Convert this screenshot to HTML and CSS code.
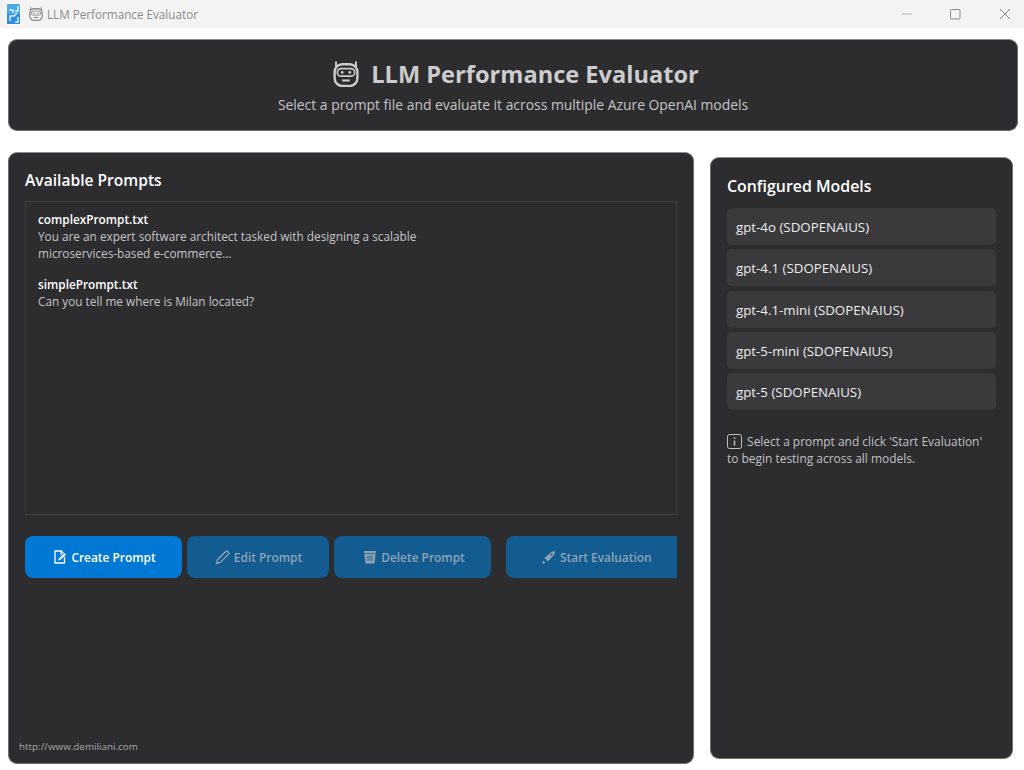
FILE: index.html
```html
<!DOCTYPE html>
<html lang="en">
<head>
<meta charset="utf-8">
<title>LLM Performance Evaluator</title>
<link rel="stylesheet" href="styles.css">
</head>
<body>
<div class="titlebar">
  <svg class="app-logo" width="14" height="22" viewBox="0 0 14 22"><rect width="14" height="22" fill="#fff"/><rect x="0" y="1" width="13" height="20" rx="1" fill="#4aa8e8"/><rect x="0" y="11" width="13" height="10" fill="#2f8fdc"/><path d="M2 7h4v3M11 3v5H8M3 18v-5h4l3-3M11 14v5H8" fill="none" stroke="#d8f1ff" stroke-width="1.500"/></svg>
  <svg class="title-bot" width="14" height="14" viewBox="0 0 24 24"><use href="#bot"/></svg>
  <span class="title-text">LLM Performance Evaluator</span>
  <div class="win-controls">
    <svg width="12" height="12" viewBox="0 0 12 12"><path d="M1 6h10" stroke="#b5b5b5" stroke-width="1"/></svg>
    <svg width="12" height="12" viewBox="0 0 12 12"><rect x=".5" y="1.500" width="9.500" height="9.500" rx="1" fill="none" stroke="#8a8a8a" stroke-width="1"/></svg>
    <svg width="12" height="12" viewBox="0 0 12 12"><path d="M1 1l10 10M11 1L1 11" stroke="#8a8a8a" stroke-width="1"/></svg>
  </div>
</div>

<svg class="defs" width="0" height="0">
  <defs>
    <symbol id="bot" viewBox="0 0 24 24">
      <path d="M2.800 .5v6M21.200 .5v6" stroke="currentColor" stroke-width="1.800"/>
      <rect x="1.500" y="3" width="21" height="20" rx="7" fill="none" stroke="currentColor" stroke-width="2.200"/>
      <rect x="4" y="7" width="16" height="7" rx="3.500" fill="none" stroke="currentColor" stroke-width="1.500"/>
      <circle cx="8.500" cy="10.500" r="1.300" fill="currentColor"/>
      <circle cx="15.500" cy="10.500" r="1.300" fill="currentColor"/>
      <path d="M8.500 18h7" stroke="currentColor" stroke-width="2"/>
    </symbol>
  </defs>
</svg>

<header class="hero card">
  <h1 class="hero-title"><svg class="hero-bot" width="26" height="26" viewBox="0 0 24 24"><use href="#bot"/></svg>LLM Performance Evaluator</h1>
  <p class="hero-sub">Select a prompt file and evaluate it across multiple Azure OpenAI models</p>
</header>

<main class="columns">
  <section class="prompts card">
    <h2 class="section-title">Available Prompts</h2>
    <div class="prompt-list">
      <div class="prompt">
        <div class="prompt-name">complexPrompt.txt</div>
        <div class="prompt-text">You are an expert software architect tasked with designing a scalable<br>microservices-based e-commerce...</div>
      </div>
      <div class="prompt">
        <div class="prompt-name">simplePrompt.txt</div>
        <div class="prompt-text">Can you tell me where is Milan located?</div>
      </div>
    </div>
    <div class="actions">
      <button class="btn btn-create">
        <svg width="14" height="14" viewBox="0 0 14 14"><path d="M8.500 1H2v12h9.500V5z" fill="none" stroke="currentColor" stroke-width="1.300"/><path d="M8 1v4h3.500" fill="none" stroke="currentColor" stroke-width="1"/><path d="M4.500 11l1-2.500L11.500 3l2 1.500-6 5.500z" fill="currentColor" stroke="#0078d4" stroke-width=".7"/></svg>
        Create Prompt
      </button>
      <button class="btn btn-edit">
        <svg width="15" height="15" viewBox="0 0 15 15"><path d="M1.500 13.500l1-3.800L10.700 1.500a1.400 1.400 0 0 1 2 0l.8.8a1.400 1.400 0 0 1 0 2L5.300 12.500z" fill="none" stroke="currentColor" stroke-width="1.300"/></svg>
        Edit Prompt
      </button>
      <button class="btn btn-delete">
        <svg width="14" height="14" viewBox="0 0 14 14"><path d="M1 1h12L11.500 13.500h-9z" fill="currentColor"/><path d="M1.500 3.500h11" stroke="#125c91" stroke-width=".8"/><path d="M5 5.500v5.500M7 5.500v5.500M9 5.500v5.500" stroke="#125c91" stroke-width=".8"/></svg>
        Delete Prompt
      </button>
      <button class="btn btn-start">
        <svg width="15" height="15" viewBox="0 0 15 15"><path d="M3.500 8L10 2.200c1.200-.9 2.700-1 3.800-.9.200 1.200 0 2.700-1 3.800L7 11.500z" fill="currentColor"/><circle cx="10.500" cy="4.500" r="1.100" fill="#125c91"/><path d="M1 14l3.500-1.300L2.300 10.500z" fill="currentColor"/></svg>
        Start Evaluation
      </button>
    </div>
    <div class="footer-link">http://www.demiliani.com</div>
  </section>

  <aside class="models card">
    <h2 class="section-title models-title">Configured Models</h2>
    <ul class="model-list">
      <li class="model">gpt-4o (SDOPENAIUS)</li>
      <li class="model">gpt-4.1 (SDOPENAIUS)</li>
      <li class="model">gpt-4.1-mini (SDOPENAIUS)</li>
      <li class="model">gpt-5-mini (SDOPENAIUS)</li>
      <li class="model">gpt-5 (SDOPENAIUS)</li>
    </ul>
    <p class="hint"><svg class="info" width="15" height="15" viewBox="0 0 15 15"><rect x=".5" y=".5" width="14" height="14" rx="2" fill="none" stroke="currentColor"/><path d="M7.500 6.500v5M7.500 3.200v1.800" stroke="currentColor" stroke-width="1.500"/></svg> Select a prompt and click 'Start Evaluation' to begin testing across all models.</p>
  </aside>
</main>
</body>
</html>
```
FILE: styles.css
```css
* { box-sizing: border-box; }
html, body { margin: 0; height: 100%; }
body {
  background: #fff;
  font-family: "Open Sans", "Noto Sans", sans-serif;
  color: #fff;
  width: 1024px;
  height: 770px;
  overflow: hidden;
  display: flex;
  flex-direction: column;
}
.defs { position: absolute; }
.titlebar {
  height: 28px;
  flex: none;
  background: #f3f3f3;
  display: flex;
  align-items: center;
  padding-left: 7px;
  color: #8a8a8a;
}
.app-logo { margin-right: 8px; }
.title-bot { margin-right: 4px; }
.title-text { font-size: 11.7px; color: #8c8c8c; }
.win-controls { margin-left: auto; display: flex; gap: 37px; padding-right: 13px; }
.card {
  background: #2d2d30;
  border: 1px solid #6e6e6e;
  border-top-color: #8a8a8a;
  border-radius: 9px;
}
.hero {
  flex: none;
  height: 92px;
  margin: 11px 6px 0 8px;
  text-align: center;
  padding-top: 18px;
}
.hero-title {
  margin: 0;
  padding-left: 6px;
  font-size: 23.6px;
  line-height: 32px;
  font-weight: 700;
  color: #cccccc;
  display: flex;
  justify-content: center;
  align-items: center;
  gap: 12px;
}
.hero-sub { margin: 5px 0 0; font-size: 13.9px; line-height: 20px; color: #c4c4c4; }
.columns { flex: 1; min-height: 0; display: flex; align-items: flex-start; padding: 21px 11px 6px 8px; gap: 16px; }
.prompts {
  width: 686px;
  height: 612px;
  padding: 16px;
  flex: none;
  position: relative;
}
.section-title { margin: 0; font-size: 15.6px; line-height: 23px; font-weight: 600; color: #fff; }
.models-title { font-size: 15.9px; line-height: 24px; }
.prompt-list {
  margin-top: 9px;
  height: 314px;
  border: 1px solid #3f3f42;
  padding: 9px 12px;
  font-size: 11.8px;
  line-height: 16.500px;
}
.prompt { margin-bottom: 15px; }
.prompt-name { font-weight: 600; color: #fff; }
.prompt-text { color: #c4c4c4; position: relative; top: .5px; }
.actions { margin-top: 21px; display: flex; gap: 5px; overflow: hidden; }
.btn {
  height: 42px;
  border: 0;
  border-radius: 8px;
  font-family: inherit;
  font-size: 11.900px;
  font-weight: 600;
  display: flex;
  justify-content: center;
  align-items: center;
  gap: 4px;
  background: #125c91;
  color: #8fa3b3;
  flex: none;
  padding: 0;
}
.btn-create { width: 157px; background: #0078d4; color: #fff; padding-left: 2px; }
.btn-edit { width: 142px; padding-left: 1px; }
.btn-delete { width: 157px; padding-left: 3px; }
.btn-start { width: 190px; margin-left: 10px; justify-content: flex-start; padding-left: 35px; }
.footer-link { position: absolute; left: 10px; bottom: 10px; font-size: 9.850px; line-height: 14px; color: #a8a8a8; }
.models {
  width: 303px;
  height: 602px;
  margin-top: 5px;
  padding: 16px;
  flex: none;
}
.model-list { list-style: none; margin: 10px 0 0; padding: 0; display: flex; flex-direction: column; gap: 4.250px; }
.model {
  height: 37px;
  background: #3a3a3d;
  border-radius: 5px;
  padding: 0 9px;
  font-size: 13.300px;
  line-height: 38px;
  color: #ececec;
}
.hint { margin: 24px 0 0; font-size: 11.950px; line-height: 16.500px; color: #c0c0c0; }
.info { vertical-align: -3px; margin-right: 2px; }
```
